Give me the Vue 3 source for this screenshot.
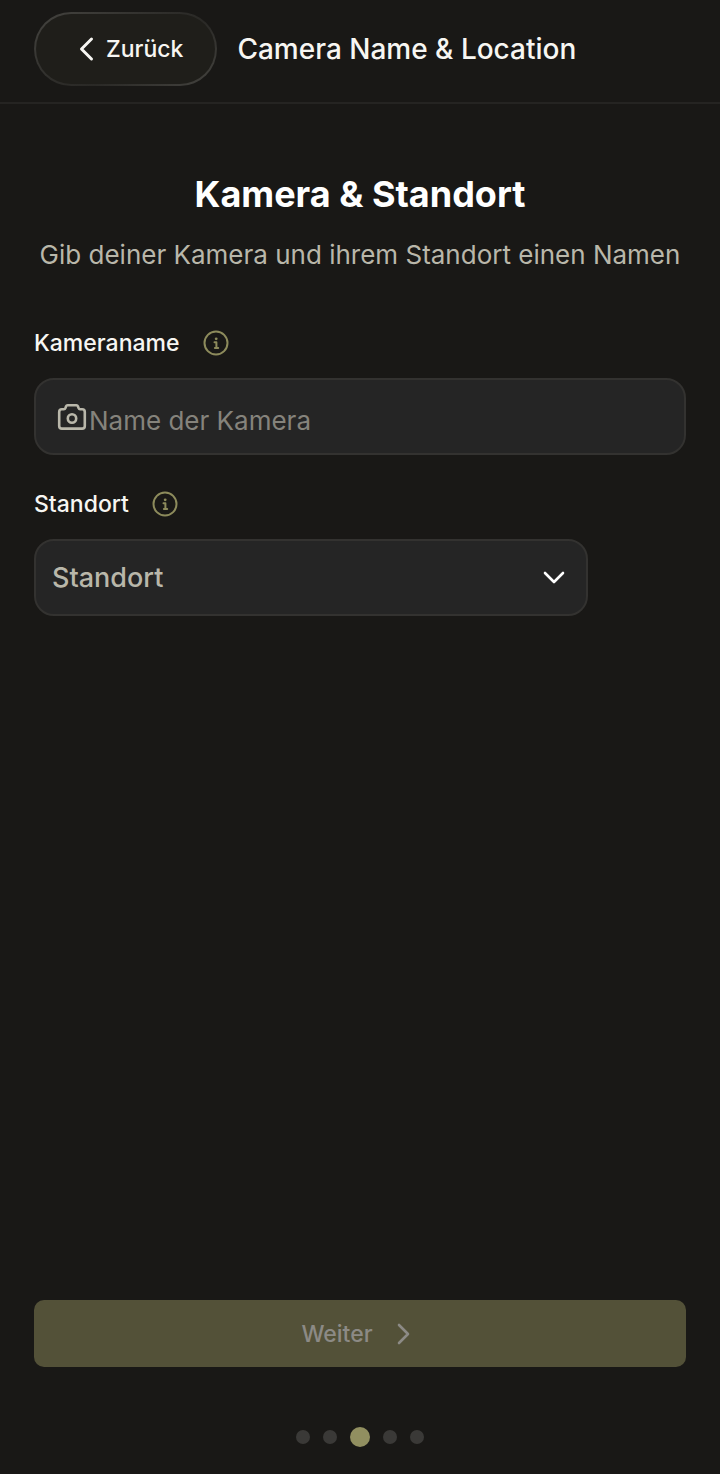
<script setup>
import { ref } from 'vue'

const cameraName = ref('')
const location = ref('')
const steps = 5
const currentStep = 3
</script>

<template>
  <div class="screen">
    <header class="topbar">
      <button class="back" type="button">
        <svg class="back-icon" viewBox="0 0 16 26" aria-hidden="true">
          <path d="M13.500 3 3.500 13l10 10" />
        </svg>
        <span>Zurück</span>
      </button>
      <span class="topbar-title">Camera Name &amp; Location</span>
    </header>

    <main class="content">
      <h1 class="heading">Kamera &amp; Standort</h1>
      <p class="subtitle">Gib deiner Kamera und ihrem Standort einen Namen</p>

      <section class="field">
        <div class="label-row">
          <label for="camera-name">Kameraname</label>
          <button class="info" type="button" aria-label="Info Kameraname">
            <svg viewBox="0 0 26 26" aria-hidden="true">
              <circle cx="13" cy="13" r="11.500" />
              <path d="M11.500 12.300h1.900v5.700M11.900 18h3.300" />
              <circle class="dot" cx="13.200" cy="8.800" r="1.400" />
            </svg>
          </button>
        </div>
        <div class="box">
          <svg class="camera" viewBox="0 0 30 28" aria-hidden="true">
            <path d="M10.500 2.200h9q1 0 1.400 1l.7 1.900q.4 1.200 1.500 1.200h2q2.700 0 2.700 2.700v13.900q0 2.700-2.700 2.700H4.900q-2.700 0-2.700-2.700V9q0-2.700 2.700-2.700h2q1.100 0 1.500-1.200l.7-1.900q.4-1 1.400-1z" />
            <circle cx="15" cy="15.500" r="4.200" />
          </svg>
          <input id="camera-name" v-model="cameraName" type="text" placeholder="Name der Kamera" />
        </div>
      </section>

      <section class="field">
        <div class="label-row">
          <label for="location">Standort</label>
          <button class="info" type="button" aria-label="Info Standort">
            <svg viewBox="0 0 26 26" aria-hidden="true">
              <circle cx="13" cy="13" r="11.500" />
              <path d="M11.500 12.300h1.900v5.700M11.900 18h3.300" />
              <circle class="dot" cx="13.200" cy="8.800" r="1.400" />
            </svg>
          </button>
        </div>
        <div class="box box-select">
          <select id="location" v-model="location">
            <option value="">Standort</option>
          </select>
          <svg class="chevron" viewBox="0 0 22 14" aria-hidden="true">
            <path d="m2 2 9 9 9-9" />
          </svg>
        </div>
      </section>
    </main>

    <footer class="footer">
      <button class="next" type="button" disabled>
        <span>Weiter</span>
        <svg viewBox="0 0 14 22" aria-hidden="true">
          <path d="m2 2 9 9-9 9" />
        </svg>
      </button>
      <div class="steps">
        <span v-for="n in steps" :key="n" class="step" :class="{ active: n === currentStep }"></span>
      </div>
    </footer>
  </div>
</template>

<style>
body {
  background: #191816;
}
</style>

<style scoped>
.screen {
  display: flex;
  flex-direction: column;
  box-sizing: border-box;
  min-height: 100vh;
  background: #191816;
  color: #f7f6f2;
  font-family: Inter, "Liberation Sans", sans-serif;
}

button,
input,
select {
  font-family: inherit;
}

svg {
  display: block;
  flex: none;
  fill: none;
  stroke: currentColor;
  stroke-linecap: round;
  stroke-linejoin: round;
}

.topbar {
  display: flex;
  align-items: center;
  gap: 20px;
  padding: 12px 34px 16px;
  border-bottom: 2px solid #252422;
}

.back {
  display: flex;
  align-items: center;
  gap: 12px;
  height: 74px;
  padding: 0 32px 0 42px;
  border: 2px solid transparent;
  border-radius: 37px;
  background:
    linear-gradient(#1f1e1a, #1f1e1a) padding-box,
    linear-gradient(150deg, #454440, #2e2d2a 45%, #2a2926 60%, #454440) border-box;
  color: #f7f6f2;
  font-size: 23px;
  font-weight: 500;
}

.back-icon {
  width: 16px;
  height: 26px;
  stroke-width: 3;
}

.topbar-title {
  font-size: 28px;
  font-weight: 500;
}

.content {
  flex: 1;
  padding: 66px 34px 0;
}

.heading {
  margin: 0;
  color: #ffffff;
  font-size: 36px;
  line-height: 48px;
  font-weight: 700;
  text-align: center;
}

.subtitle {
  margin: 19px 0 0;
  color: #b9b7aa;
  font-size: 26px;
  line-height: 36px;
  text-align: center;
  white-space: nowrap;
}

.field {
  margin-top: 54px;
}

.field + .field {
  margin-top: 33px;
}

.label-row {
  display: flex;
  align-items: center;
  gap: 23px;
  height: 32px;
  margin-bottom: 19px;
  font-size: 23px;
  font-weight: 500;
}

.info {
  padding: 0;
  border: 0;
  background: none;
  color: #8d8b5c;
}

.info svg {
  width: 26px;
  height: 26px;
  stroke-width: 2;
}

.info .dot {
  fill: currentColor;
  stroke: none;
}

.box {
  display: flex;
  align-items: center;
  box-sizing: border-box;
  height: 77px;
  padding-left: 21px;
  border: 2px solid #333230;
  border-radius: 20px;
  background: #252525;
}

.camera {
  width: 30px;
  height: 28px;
  color: #b9b7aa;
  stroke-width: 2.6;
}

.box input {
  flex: 1;
  min-width: 0;
  height: 100%;
  padding: 8px 16px 0 2px;
  border: 0;
  outline: none;
  background: none;
  color: #f7f6f2;
  font-size: 26px;
}

.box input::placeholder {
  color: #85837c;
  opacity: 1;
}

.box-select {
  display: grid;
  width: 85%;
  padding: 0;
}

.box-select select {
  grid-area: 1 / 1;
  width: 100%;
  height: 73px;
  padding: 0 60px 0 16px;
  border: 0;
  border-radius: 18px;
  outline: none;
  appearance: none;
  background: none;
  color: #b9b7aa;
  font-size: 27px;
  font-weight: 500;
}

.chevron {
  grid-area: 1 / 1;
  justify-self: end;
  align-self: center;
  width: 22px;
  height: 14px;
  margin-right: 21px;
  color: #ffffff;
  stroke-width: 2.6;
  pointer-events: none;
}

.footer {
  padding: 0 34px 27px;
}

.next {
  display: flex;
  align-items: center;
  justify-content: center;
  gap: 24px;
  width: 100%;
  height: 67px;
  padding: 0 8px 0 0;
  border: 0;
  border-radius: 10px;
  background: #535138;
  color: #8c8a85;
  font-size: 23px;
  font-weight: 500;
}

.next svg {
  width: 14px;
  height: 22px;
  stroke-width: 2.6;
}

.steps {
  display: flex;
  align-items: center;
  justify-content: center;
  gap: 13px;
  height: 20px;
  margin-top: 60px;
}

.step {
  width: 14px;
  height: 14px;
  border-radius: 50%;
  background: #3a3937;
}

.step.active {
  width: 20px;
  height: 20px;
  background: #918f60;
}
</style>
